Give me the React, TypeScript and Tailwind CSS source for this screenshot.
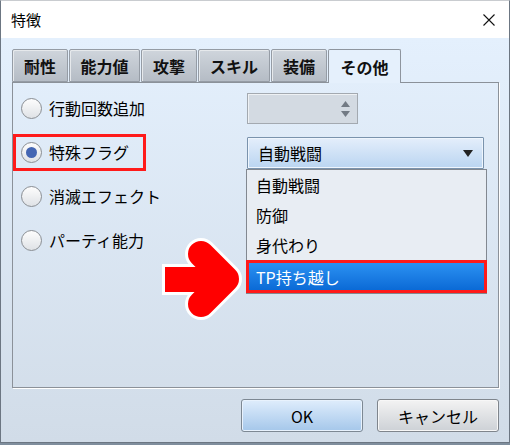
import React from "react";

const font = { fontFamily: '"Noto Sans CJK JP", "Noto Sans", sans-serif' };

function Radio({ checked }: { checked?: boolean }) {
  return (
    <span className="w-[21px] h-[21px] rounded-full border border-[#8a8e93] bg-gradient-to-b from-[#fdfdfd] to-[#dfe2e6] flex items-center justify-center shrink-0">
      {checked && <span className="w-[11px] h-[11px] rounded-full bg-[#4466b3]" />}
    </span>
  );
}

function Tab({ label, w, selected }: { label: string; w: string; selected?: boolean }) {
  return (
    <div
      className={
        selected
          ? `${w} h-[34px] -mb-px relative z-10 border border-b-0 border-[#8e959e] bg-[#e5f0fc] flex items-center justify-center text-[16px] font-bold text-[#111] rounded-t-[2px]`
          : `${w} h-[33px] border border-[#959ca5] bg-gradient-to-b from-[#cfd5dc] to-[#b5bcc5] shadow-[inset_1px_1px_0_#e6e9ec] flex items-center justify-center text-[16px] font-bold text-[#111] rounded-t-[2px]`
      }
    >
      {label}
    </div>
  );
}

export default function App() {
  const rows = ["行動回数追加", "特殊フラグ", "消滅エフェクト", "パーティ能力"];
  return (
    <div className="w-[510px] h-[445px] relative bg-[#7f8e9d] overflow-hidden" style={font}>
      <div className="w-[510px] h-[443px] flex flex-col border-x border-b border-t border-x-[#6c7682] border-b-[#6c7682] border-t-[#c9ccd0]">
        {/* title bar */}
        <div className="h-[37px] bg-white flex items-center justify-between pl-[10px] pr-[14px] shrink-0">
          <span className="text-[15px] text-black leading-none">特徴</span>
          <svg width="12" height="12" viewBox="0 0 12 12">
            <path d="M0.5 0.5 L11.5 11.5 M11.5 0.5 L0.5 11.5" stroke="#111" strokeWidth="1.1" />
          </svg>
        </div>
        {/* client */}
        <div className="flex-1 bg-gradient-to-b from-[#e4f0fd] to-[#d1dce8] pt-[11px] pl-[11px] pr-[10px] flex flex-col">
          <div className="flex items-end h-[33px] gap-[1px]">
            <Tab label="耐性" w="w-[56px]" />
            <Tab label="能力値" w="w-[71px]" />
            <Tab label="攻撃" w="w-[56px]" />
            <Tab label="スキル" w="w-[72px]" />
            <Tab label="装備" w="w-[56px]" />
            <Tab label="その他" w="w-[73px]" selected />
          </div>
          <div className="w-[487px] h-[306px] border border-[#8b9199] shadow-[1px_1px_0_#ffffff] flex">
            <div className="w-[234px] flex flex-col pt-[3px]">
              {rows.map((r, i) => (
                <div key={r} className="h-[44px] flex items-center">
                  <span
                    className={
                      "h-[37px] flex items-center gap-[7px] pl-[5px] pr-[14px] border-[3px] " +
                      (i === 1 ? "border-[#ff1a1a]" : "border-transparent")
                    }
                  >
                    <Radio checked={i === 1} />
                    <span className="text-[16px] text-black leading-none">{r}</span>
                  </span>
                </div>
              ))}
            </div>
            <div className="flex flex-col pt-[10px]">
              <div className="w-[111px] h-[31px] border border-[#a3a9b0] bg-[#d3dae2] shadow-[inset_1px_1px_0_#eef1f4] flex justify-end items-center pr-[7px]">
                <div className="flex flex-col items-center gap-[4px]">
                  <svg width="9" height="6" viewBox="0 0 9 6"><path d="M4.5 0 L9 6 H0 Z" fill="#727a84" /></svg>
                  <svg width="9" height="6" viewBox="0 0 9 6"><path d="M0 0 H9 L4.5 6 Z" fill="#727a84" /></svg>
                </div>
              </div>
              <div className="relative mt-[13px] w-[237px] h-[32px]">
                <div className="w-full h-full border border-[#7a93ad] bg-gradient-to-b from-[#e4eefb] to-[#bad5f1] shadow-[inset_0_0_0_1px_#eef5fd] flex items-center justify-between pl-[10px] pr-[10px] rounded-[1px]">
                  <span className="text-[16px] text-black leading-none">自動戦闘</span>
                  <svg width="10" height="7" viewBox="0 0 10 7"><path d="M0 0 H10 L5 7 Z" fill="#222" /></svg>
                </div>
                <div className="absolute left-[-1px] top-[32px] w-[241px] h-[125px] border border-[#828890] bg-[#e8edf3] flex flex-col z-20">
                  {["自動戦闘", "防御", "身代わり"].map((t) => (
                    <div key={t} className="h-[30px] flex items-center pl-[9px] text-[16px] text-black leading-none">
                      {t}
                    </div>
                  ))}
                  <div className="h-[33px] -mx-[1px] border-[3px] border-[#ff1a1a] bg-gradient-to-b from-[#2b91f2] to-[#0a6ad6] flex items-center pl-[7px] text-[16px] text-white leading-none">
                    TP持ち越し
                  </div>
                </div>
              </div>
            </div>
          </div>
          <div className="flex justify-end gap-[14px] mt-[11px]">
            <button className="w-[122px] h-[33px] rounded-[3px] border border-[#7d8893] bg-gradient-to-b from-[#dfedfc] to-[#a5c7ea] shadow-[inset_0_0_0_1px_#e8f2fd] text-[16px] text-black leading-none">
              OK
            </button>
            <button className="w-[122px] h-[33px] rounded-[3px] border border-[#7f858c] bg-gradient-to-b from-[#f3f3f3] to-[#cdd1d6] shadow-[inset_0_0_0_1px_#f7f7f7] text-[16px] text-black leading-none">
              キャンセル
            </button>
          </div>
        </div>
      </div>
      {/* annotation arrow */}
      <svg className="absolute left-[150px] top-[230px] pointer-events-none" width="100" height="95" viewBox="0 0 100 95">
        <path d="M12 49.5 H76" stroke="#ffffff" strokeWidth="31" fill="none" />
        <path d="M51 24 L76 49 L51 74" stroke="#ffffff" strokeWidth="32" strokeLinecap="round" strokeLinejoin="round" fill="none" />
        <path d="M15 49.5 H76" stroke="#ff0000" strokeWidth="25" fill="none" />
        <path d="M51 24 L76 49 L51 74" stroke="#ff0000" strokeWidth="26" strokeLinecap="round" strokeLinejoin="round" fill="none" />
      </svg>
    </div>
  );
}
